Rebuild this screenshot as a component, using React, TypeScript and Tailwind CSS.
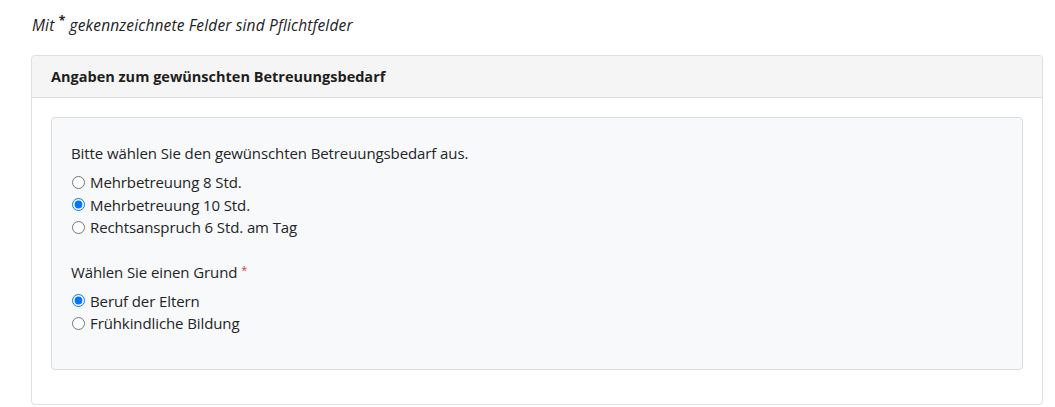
import { useState } from 'react';

const bedarfOptions = ['Mehrbetreuung 8 Std.', 'Mehrbetreuung 10 Std.', 'Rechtsanspruch 6 Std. am Tag'];
const grundOptions = ['Beruf der Eltern', 'Frühkindliche Bildung'];

const RadioGroup = ({
  name,
  options,
  value,
  onChange,
}: {
  name: string;
  options: string[];
  value: string;
  onChange: (v: string) => void;
}) => (
  <div className="flex flex-col">
    {options.map((opt) => (
      <label key={opt} className="flex items-center h-[22.5px] cursor-pointer">
        <input
          type="radio"
          name={name}
          checked={value === opt}
          onChange={() => onChange(opt)}
          className="m-0 ml-[1px] mr-[5px] w-[13px] h-[13px]"
        />
        <span>{opt}</span>
      </label>
    ))}
  </div>
);

const App = () => {
  const [bedarf, setBedarf] = useState('Mehrbetreuung 10 Std.');
  const [grund, setGrund] = useState('Beruf der Eltern');

  return (
    <div className="w-[1055px] h-[407px] bg-white text-[#212529] font-['Open_Sans',sans-serif] overflow-hidden">
      <div className="pl-[32px] pr-[12px] pt-[15px]">
        {/* Pflichtfeld hint */}
        <p className="italic text-[15.5px] h-[21px] leading-[21px] tracking-[0.15px] text-[#222]">
          Mit <span className="relative top-[-6px] font-bold not-italic text-[12px] leading-none">*</span> gekennzeichnete
          Felder sind Pflichtfelder
        </p>

        <div className="mt-[19px] ml-[-1px] border border-[#dfdfdf] rounded-[4px]">
          <div className="h-[42px] flex items-center px-[19px] bg-[#f5f5f5] border-b border-[#dcdcdc] rounded-t-[4px]">
            <h2 className="font-bold text-[14.5px] text-[#1e1e1e]">Angaben zum gewünschten Betreuungsbedarf</h2>
          </div>

          <div className="px-[19px] pt-[19px] pb-[34px]">
            <div className="bg-[#f8f9fa] border border-[#dcdcdc] rounded-[4px] px-[19px] pt-[24px] pb-[34px] text-[15px] tracking-[-0.1px] leading-[22px]">
              <p className="mb-[7px]">Bitte wählen Sie den gewünschten Betreuungsbedarf aus.</p>
              <RadioGroup name="bedarf" options={bedarfOptions} value={bedarf} onChange={setBedarf} />

              <p className="mt-[22px] mb-[5px]">
                Wählen Sie einen Grund <span className="text-[#dc3545] text-[11px] relative top-[-4px]">*</span>
              </p>
              <RadioGroup name="grund" options={grundOptions} value={grund} onChange={setGrund} />
            </div>
          </div>
        </div>
      </div>
    </div>
  );
};

export default App;
